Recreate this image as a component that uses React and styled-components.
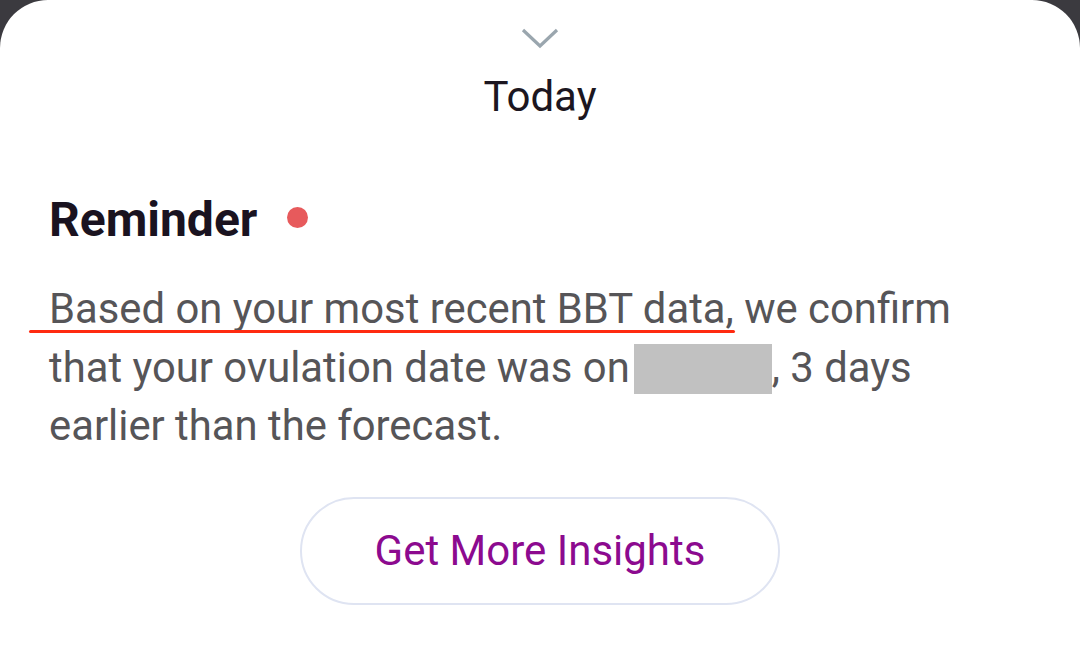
import React from "react";
import styled, { createGlobalStyle } from "styled-components";

const Global = createGlobalStyle`
  html, body { margin: 0; padding: 0; background: #3b3a3f; }
  body { font-family: Roboto, "Noto Sans", sans-serif; }
`;

const Screen = styled.div`
  width: 1080px;
  height: 649px;
  background: #3b3a3f;
  overflow: hidden;
`;

const Sheet = styled.div`
  position: relative;
  height: 100%;
  background: #ffffff;
  border-radius: 48px 48px 0 0;
  display: flex;
  flex-direction: column;
`;

const Header = styled.div`
  display: flex;
  flex-direction: column;
  align-items: center;
  padding-top: 27px;
`;

const Chevron = styled.svg`
  width: 38px;
  height: 22px;
  display: block;
`;

const Title = styled.div`
  margin-top: 22px;
  font-size: 42px;
  line-height: 52px;
  color: #1c1620;
`;

const Content = styled.div`
  padding: 0 49px;
  margin-top: 67px;
  display: flex;
  flex-direction: column;
`;

const ReminderRow = styled.div`
  display: flex;
  align-items: center;
  gap: 30px;
`;

const Heading = styled.h2`
  margin: 0;
  font-size: 48px;
  line-height: 60px;
  font-weight: 700;
  color: #1a1320;
`;

const Dot = styled.span`
  width: 21px;
  height: 21px;
  border-radius: 50%;
  background: #e75a5c;
  margin-top: -6px;
`;

const Body = styled.p`
  position: relative;
  margin: 30px 0 0;
  font-size: 41.8px;
  line-height: 58.5px;
  color: #565558;
  width: 960px;
`;

const Redacted = styled.span`
  display: inline-block;
  width: 138px;
  height: 50px;
  background: #c1c1c1;
  vertical-align: -12px;
  margin-left: 4px;
`;

const Annotation = styled.span`
  position: absolute;
  left: -20px;
  top: 50px;
  width: 706px;
  height: 3px;
  background: #ff2a10;
  border-radius: 2px;
`;

const ButtonWrap = styled.div`
  display: flex;
  justify-content: center;
  margin-top: 41px;
`;

const Button = styled.button`
  width: 480px;
  height: 108px;
  border: 2px solid #dfe4f2;
  border-radius: 54px;
  background: #fff;
  color: #8c0a8f;
  font-family: Roboto, "Noto Sans", sans-serif;
  font-size: 42px;
  padding: 0;
  cursor: pointer;
`;

export default function App() {
  return (
    <>
      <Global />
      <Screen>
        <Sheet>
          <Header>
            <Chevron viewBox="0 0 38 22">
              <polyline points="2,3 19,19 36,3" fill="none" stroke="#9aa6ae" strokeWidth="3.2" />
            </Chevron>
            <Title>Today</Title>
          </Header>
          <Content>
            <ReminderRow>
              <Heading>Reminder</Heading>
              <Dot />
            </ReminderRow>
            <Body>
              <Annotation />
              Based on your most recent BBT data, we confirm that your ovulation date was on<Redacted />, 3 days earlier than the forecast.
            </Body>
            <ButtonWrap>
              <Button>Get More Insights</Button>
            </ButtonWrap>
          </Content>
        </Sheet>
      </Screen>
    </>
  );
}
